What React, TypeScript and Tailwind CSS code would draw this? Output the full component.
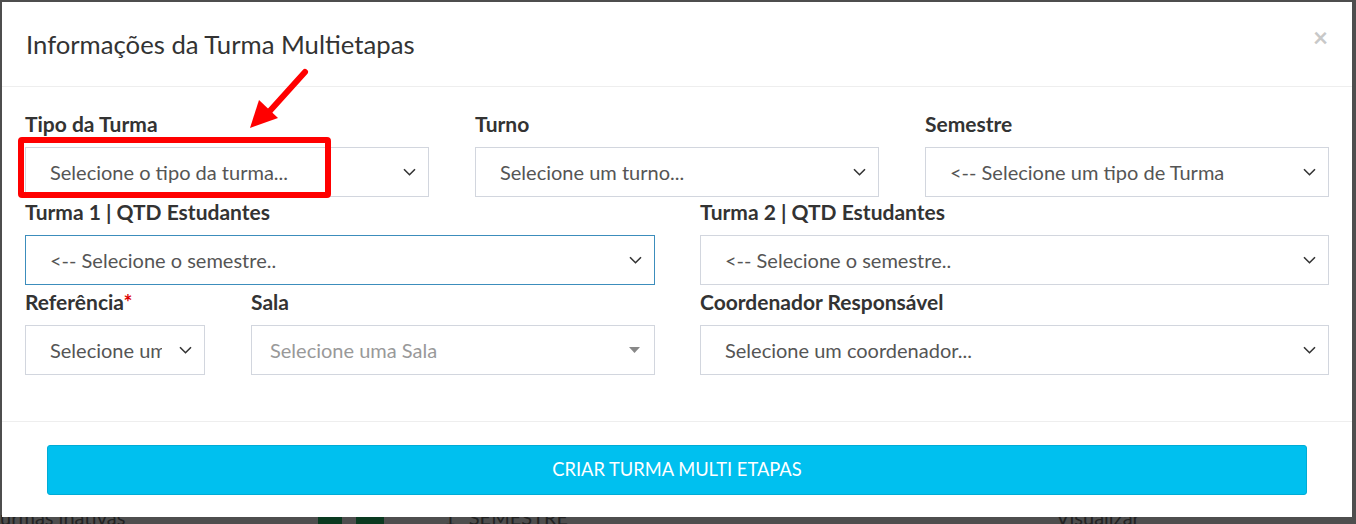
import { ReactNode } from 'react'

const font = { fontFamily: '"Source Sans Pro", Lato, "Noto Sans", sans-serif' }

function Chevron() {
  return (
    <svg width="13" height="8" viewBox="0 0 13 8" className="shrink-0">
      <path d="M1 1.2l5.5 5.5 5.5-5.5" fill="none" stroke="#333" strokeWidth="1.6" />
    </svg>
  )
}

function Field({ label, children, className }: { label: ReactNode; children: ReactNode; className?: string }) {
  return (
    <div className={className}>
      <div className="mb-[8px] text-[21px] font-bold leading-[30px] text-[#333]">{label}</div>
      {children}
    </div>
  )
}

function Select({ text, focused, clip }: { text: string; focused?: boolean; clip?: boolean }) {
  return (
    <div
      className={
        'flex h-[50px] items-center justify-between border bg-white pr-[12px] pl-[24px] ' +
        (focused ? 'border-[#3c8dbc]' : 'border-[#d2d6de]')
      }
    >
      <span className={'text-[20px] whitespace-nowrap text-[#555] ' + (clip ? 'w-[112px] overflow-hidden' : '')}>
        {text}
      </span>
      <Chevron />
    </div>
  )
}

export default function App() {
  return (
    <div className="relative h-[524px] w-[1356px] overflow-hidden bg-[#4e4e4e]" style={font}>
      {/* page behind the overlay */}
      <div className="flex h-full items-end text-[20px] leading-[14px] text-[#222]">
        <div className="w-[318px]">urmas inativas</div>
        <div className="mr-[14px] h-[10px] w-[24px] bg-[#0b3a20]" />
        <div className="mr-[60px] h-[10px] w-[28px] bg-[#0b3a20]" />
        <div className="w-[612px] uppercase">1º semestre</div>
        <div>Visualizar</div>
      </div>

      {/* modal */}
      <div className="absolute top-[2px] left-[2px] w-[1350px] bg-white">
        <div className="flex h-[85px] items-center justify-between border-b border-[#eeeeee] pr-[24px] pl-[24px]">
          <h4 className="text-[25.7px] leading-[30px] text-[#333]">Informações da Turma Multietapas</h4>
          <span className="mb-[14px] text-[26px] leading-none font-bold text-[#c8c8c8]">×</span>
        </div>

        <div className="px-[23px] pt-[22px] pb-[46px]">
          <div className="flex gap-[46px]">
            <Field label="Tipo da Turma" className="w-[404px]">
              <Select text="Selecione o tipo da turma..." />
            </Field>
            <Field label="Turno" className="w-[404px]">
              <Select text="Selecione um turno..." />
            </Field>
            <Field label="Semestre" className="w-[404px]">
              <Select text="<-- Selecione um tipo de Turma" />
            </Field>
          </div>

          <div className="flex gap-[45px]">
            <Field label="Turma 1 | QTD Estudantes" className="w-[630px]">
              <Select text="<-- Selecione o semestre.." focused />
            </Field>
            <Field label="Turma 2 | QTD Estudantes" className="w-[629px]">
              <Select text="<-- Selecione o semestre.." />
            </Field>
          </div>

          <div className="mt-[2px] flex gap-[45px]">
            <div className="flex w-[630px] gap-[46px]">
              <Field
                label={
                  <>
                    Referência<span className="text-[#dd0000]">*</span>
                  </>
                }
                className="w-[180px]"
              >
                <Select text="Selecione uma" clip />
              </Field>
              <Field label="Sala" className="w-[404px]">
                <div className="flex h-[50px] items-center justify-between border border-[#d2d6de] pr-[14px] pl-[18px]">
                  <span className="text-[20px] text-[#999]">Selecione uma Sala</span>
                  <svg width="11" height="6" viewBox="0 0 11 6">
                    <path d="M0 0h11L5.5 6z" fill="#888" />
                  </svg>
                </div>
              </Field>
            </div>
            <Field label="Coordenador Responsável" className="w-[629px]">
              <Select text="Selecione um coordenador..." />
            </Field>
          </div>
        </div>

        <div className="border-t border-[#eeeeee] px-[45px] pt-[23px] pb-[22px]">
          <button className="flex h-[50px] w-full items-center justify-center rounded-[3px] border border-[#00acd6] bg-[#00c0ef] text-[18.3px] text-white uppercase">
            Criar turma multi etapas
          </button>
        </div>
      </div>

      {/* annotation */}
      <div className="absolute top-[137px] left-[18px] h-[61px] w-[313px] rounded-[4px] border-[6px] border-[#ff0000]" />
      <svg className="absolute top-[64px] left-[244px]" width="70" height="70" viewBox="0 0 70 70">
        <path d="M61 8L24 49" stroke="#ff0000" strokeWidth="6" strokeLinecap="round" />
        <path d="M6 64L15 36L34 54Z" fill="#ff0000" />
      </svg>
    </div>
  )
}
